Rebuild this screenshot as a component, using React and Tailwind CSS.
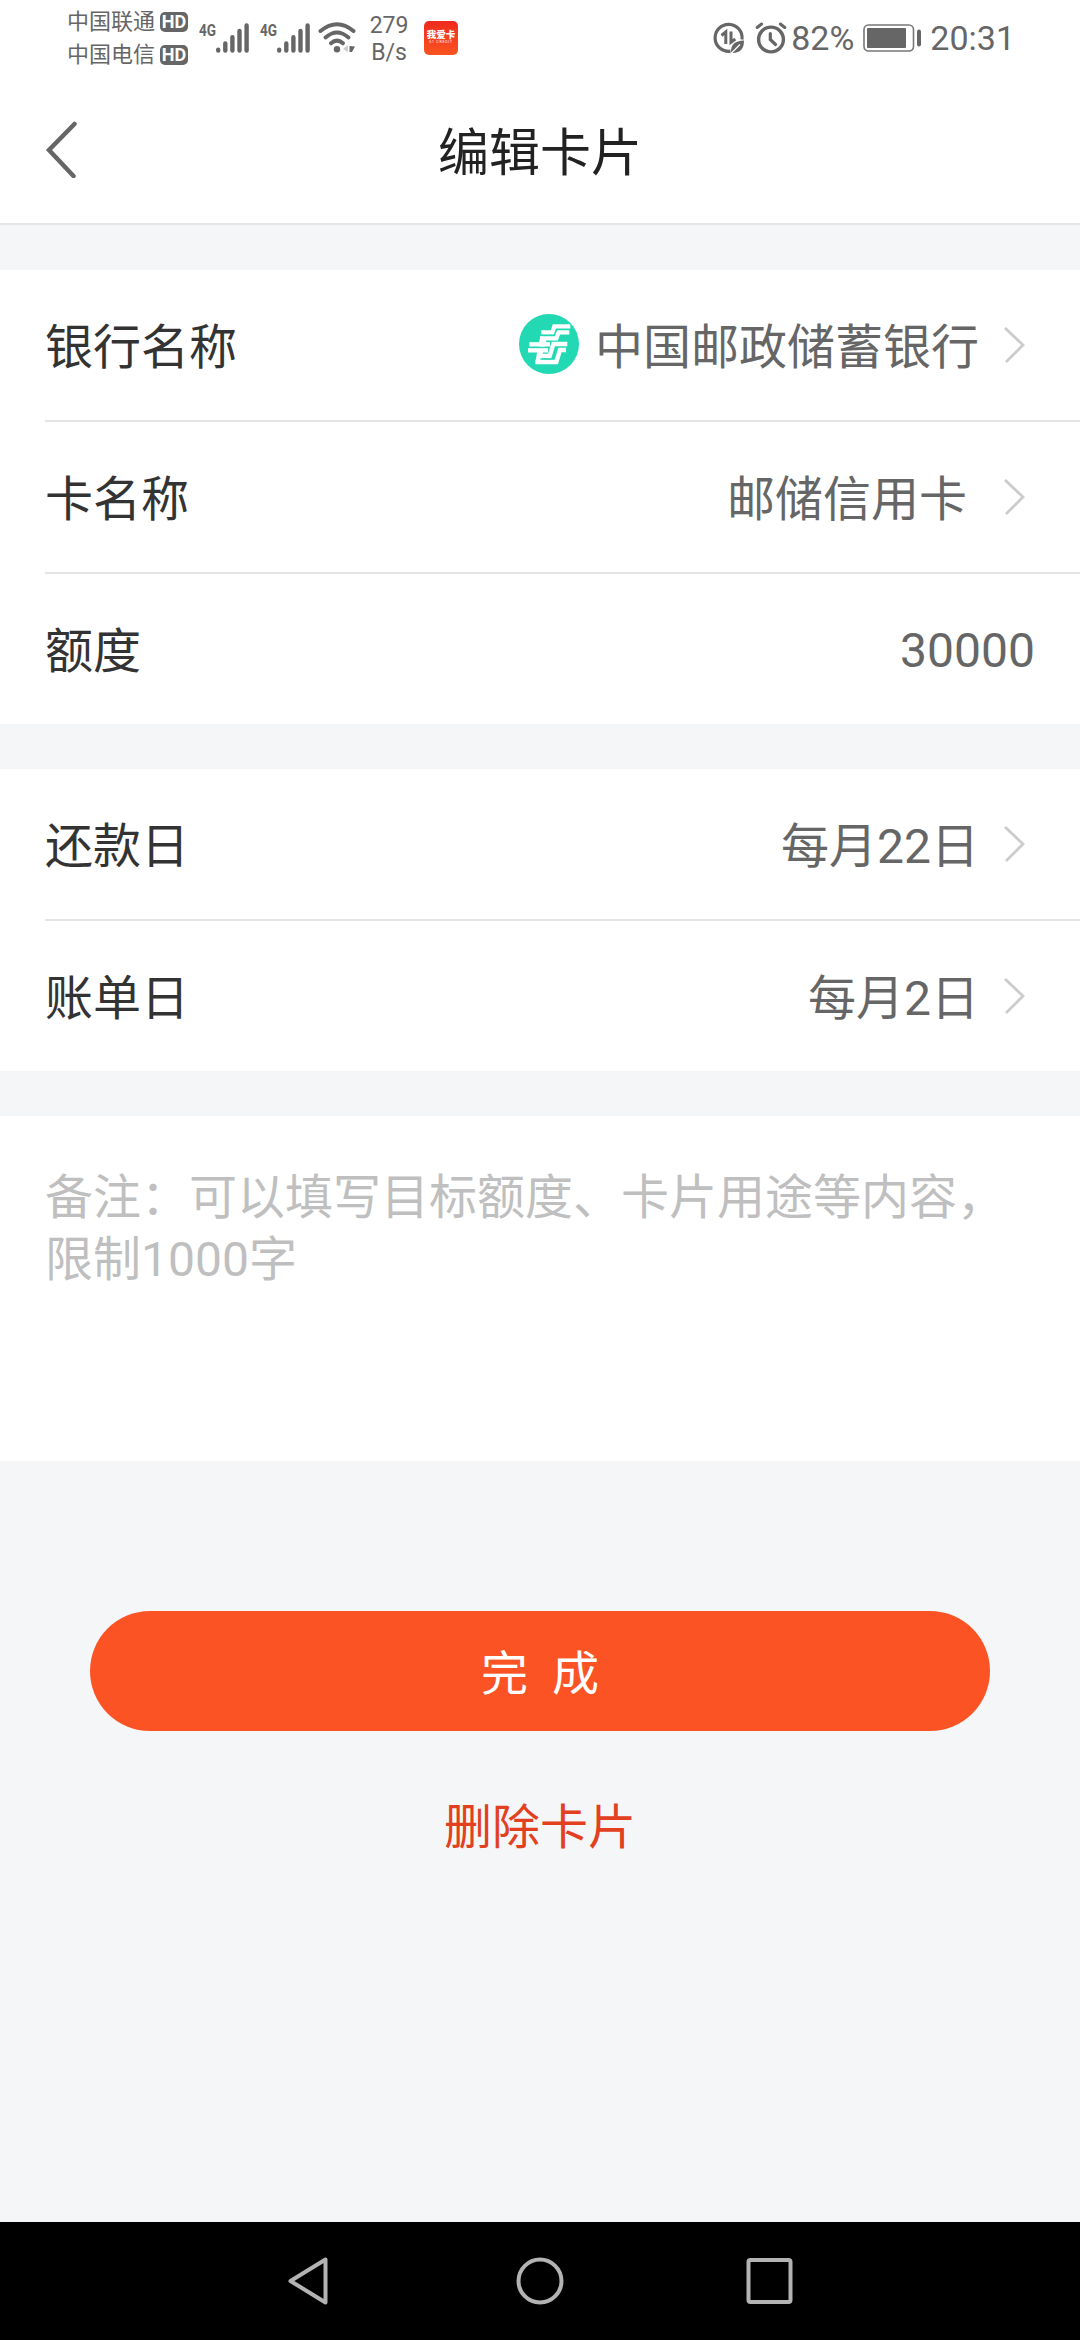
import React, { useState } from 'react';

const Chevron = () => (
    <svg className="h-[38px] w-[22px] shrink-0" viewBox="0 0 22 38" fill="none">
        <path d="M2 2 L20 19 L3 36" stroke="#cccccc" strokeWidth="2.8" />
    </svg>
);

const BankLogo = () => (
    <svg className="mr-[16px] mb-[2px] h-[60px] w-[60px] shrink-0" viewBox="27 27 180 180" fill="none">
        <circle cx="117" cy="117" r="90" fill="#22d9b3" />
        <g stroke="#ffffff" strokeWidth="13">
            <path d="M181 64 H133 L127 82 H94" />
            <path d="M178 82 H146 L139 100 H90" />
            <path d="M101 96 L94 126" strokeWidth="20" />
            <path d="M58 118 H120" />
            <path d="M54 136 H114" />
            <path d="M172 117 H130 L119 153 H80" />
            <path d="M168 135 H150 L139 171 H76" />
            <path d="M92 136 L84 172" strokeWidth="16" />
        </g>
        <path d="M96 91 H130 M66 127 H108 M90 162 H128" stroke="#22d9b3" strokeWidth="3" />
    </svg>
);

const HdBadge = () => (
    <span className="ml-[5px] flex h-[20px] w-[28px] items-center justify-center rounded-[5px] bg-[#666666] text-[18px] leading-none font-bold text-white">
        HD
    </span>
);

const Signal = () => (
    <div className="flex h-[30px] items-start">
        <span className="w-[17px] origin-left scale-x-[0.8] text-[17px] leading-[14px] font-bold">4G</span>
        <svg className="h-[30px] w-[33px]" viewBox="0 0 33 30" stroke="#666666" strokeWidth="4.4" strokeLinecap="round">
            <path d="M2.2 26.8 V27.6 M9.3 20.4 V27.6 M16.4 14.2 V27.6 M23.5 8 V27.6 M30.6 2.4 V27.6" />
        </svg>
    </div>
);

const Wifi = () => (
    <svg className="ml-[8px] h-[32px] w-[38px]" viewBox="0 0 38 32" fill="none" stroke="#666666" strokeWidth="4" strokeLinecap="round">
        <path d="M2.5 9 Q19 -4.5 35.5 9" />
        <path d="M7.5 15.5 Q19 5.5 30.5 15.5" />
        <path d="M13 21.3 Q19 16 25 21.3" />
        <circle cx="19" cy="27.3" r="3.2" fill="#666666" stroke="none" />
        <path d="M25 27 L30 23 V30 Z" fill="#cccccc" stroke="none" />
        <path d="M31.5 24 L37 24.5 L34 30 H31.5 Z" fill="#666666" stroke="none" />
    </svg>
);

const DataSaver = () => (
    <svg className="h-[32px] w-[32px]" viewBox="0 0 32 32" fill="none" stroke="#666666">
        <path d="M17.5 29.2 A13.5 13.5 0 1 1 29 17.5" strokeWidth="3.2" />
        <path d="M8.5 13.5 L12.8 10 V22" strokeWidth="3" />
        <path d="M18 9.5 V20.3 L22.3 17" strokeWidth="3" />
        <path d="M18 31 C17.5 22 22 19 31 18.5 C31 26 28 31.5 18 31 Z" fill="#666666" stroke="none" />
        <path d="M18 31.5 L27 22.5" stroke="#ffffff" strokeWidth="1.2" />
    </svg>
);

const Alarm = () => (
    <svg className="ml-[10px] h-[32px] w-[32px]" viewBox="0 0 32 32" fill="none" stroke="#666666" strokeLinecap="round">
        <circle cx="16" cy="17.5" r="12.4" strokeWidth="3.4" />
        <path d="M2.2 5.5 L6.6 2 M29.8 5.5 L25.4 2" strokeWidth="3" />
        <path d="M15.3 11.5 V17.5 L20.5 22.5" strokeWidth="3.2" />
    </svg>
);

const Battery = () => (
    <svg className="ml-[9px] h-[28px] w-[58px]" viewBox="0 0 58 28" fill="none">
        <rect x="1" y="1" width="49.5" height="26" rx="4.5" stroke="#777777" strokeWidth="1.6" />
        <rect x="4" y="4" width="39" height="20" rx="1" fill="#666666" />
        <rect x="54" y="5.5" width="4" height="17" rx="2" fill="#666666" />
    </svg>
);

const StatusBar = () => (
    <div className="flex h-[75px] items-center justify-between pr-[65px] pl-[67px] text-[#666666]">
        <div className="flex items-center">
            <div className="flex flex-col pt-px text-[22px] leading-[33px]">
                <div className="flex items-center">中国联通<HdBadge /></div>
                <div className="flex items-center">中国电信<HdBadge /></div>
            </div>
            <div className="ml-[11px] flex gap-[11px]">
                <Signal />
                <Signal />
            </div>
            <Wifi />
            <div className="ml-[12px] w-[42px] pt-[2px] text-center text-[23px] leading-[27px]">
                <div>279</div>
                <div>B/s</div>
            </div>
            <div className="ml-[14px] flex h-[34px] w-[34px] flex-col items-center justify-center rounded-[5px] bg-linear-to-b from-[#f0281e] to-[#f9531f] text-white">
                <span className="text-[9.5px] leading-[10px] font-black whitespace-nowrap">我爱卡</span>
                <span className="text-[3.5px] leading-[5px] tracking-[0.8px] whitespace-nowrap">51 CREDIT</span>
            </div>
        </div>
        <div className="flex items-center">
            <DataSaver />
            <Alarm />
            <span className="ml-[4px] text-[34px] leading-none">82%</span>
            <Battery />
            <span className="ml-[9px] text-[34px] leading-none">20:31</span>
        </div>
    </div>
);

const Row = ({ label, icon, value, arrow, valueClass = 'mr-[24px]', last }) => (
    <div className="pl-[45px]">
        <div className={`flex items-center justify-between ${last ? 'h-[150px]' : 'h-[152px] border-b-2 border-[#e4e4e4]'}`}>
            <span className="pt-[5px] text-[#333333]">{label}</span>
            <div className={`flex items-center text-[#666666] ${arrow ? 'pr-[55px]' : 'pr-[45px]'}`}>
                {icon}
                <span className={arrow ? `pt-[5px] ${valueClass}` : 'pt-[3px]'}>{value}</span>
                {arrow && <Chevron />}
            </div>
        </div>
    </div>
);

const App = () => {
    const [remark, setRemark] = useState('');

    return (
        <div className="flex h-[2340px] w-[1080px] flex-col overflow-hidden bg-[#f4f6f8] font-[Roboto,'Noto_Sans_CJK_SC',sans-serif] text-[48px] leading-[62px]">
            <div className="h-[225px] border-b-2 border-[#e4e5e7] bg-white">
                <StatusBar />
                <div className="flex h-[148px] items-center">
                    <svg className="ml-[45px] h-[58px] w-[34px]" viewBox="0 0 34 58" fill="none">
                        <path d="M29.5 4 L4 30 L28.5 56" stroke="#666666" strokeWidth="4.5" strokeLinecap="round" />
                    </svg>
                    <h1 className="flex-1 pt-[9px] text-center text-[51px] text-[#222222]">编辑卡片</h1>
                    <div className="w-[79px]" />
                </div>
            </div>

            {/* Card info */}
            <div className="mt-[45px] bg-white">
                <Row label="银行名称" icon={<BankLogo />} value="中国邮政储蓄银行" arrow />
                <Row label="卡名称" value="邮储信用卡" valueClass="mr-[36px]" arrow />
                <Row label="额度" value="30000" last />
            </div>

            {/* Billing days */}
            <div className="mt-[45px] bg-white">
                <Row label="还款日" value="每月22日" arrow />
                <Row label="账单日" value="每月2日" arrow last />
            </div>

            <div className="mt-[45px] h-[345px] bg-white px-[45px] pt-[51px]">
                <textarea
                    className="block h-[260px] w-full resize-none overflow-hidden outline-none placeholder:text-[#bfbfbf]"
                    placeholder="备注：可以填写目标额度、卡片用途等内容，限制1000字"
                    value={remark}
                    onChange={(e) => setRemark(e.target.value)}
                />
            </div>

            <button className="mx-[90px] mt-[150px] h-[120px] shrink-0 rounded-full bg-[#fc5325] pt-[5px] text-[47px] text-white">
                <span className="mr-[24px]">完</span>成
            </button>
            <button className="mx-auto mt-[66px] text-[#e2401f]">删除卡片</button>

            {/* System navigation */}
            <div className="mt-auto flex h-[118px] items-center justify-center bg-black">
                <svg className="h-[50px] w-[508px]" viewBox="0 0 508 50" fill="none" stroke="#b3b3b3" strokeWidth="4" strokeLinejoin="round">
                    <path d="M4.5 25 L39.5 3.5 V46.5 Z" />
                    <circle cx="254" cy="25" r="21.5" />
                    <rect x="462.5" y="4" width="42" height="42" rx="2" />
                </svg>
            </div>
        </div>
    );
};

export default App;
